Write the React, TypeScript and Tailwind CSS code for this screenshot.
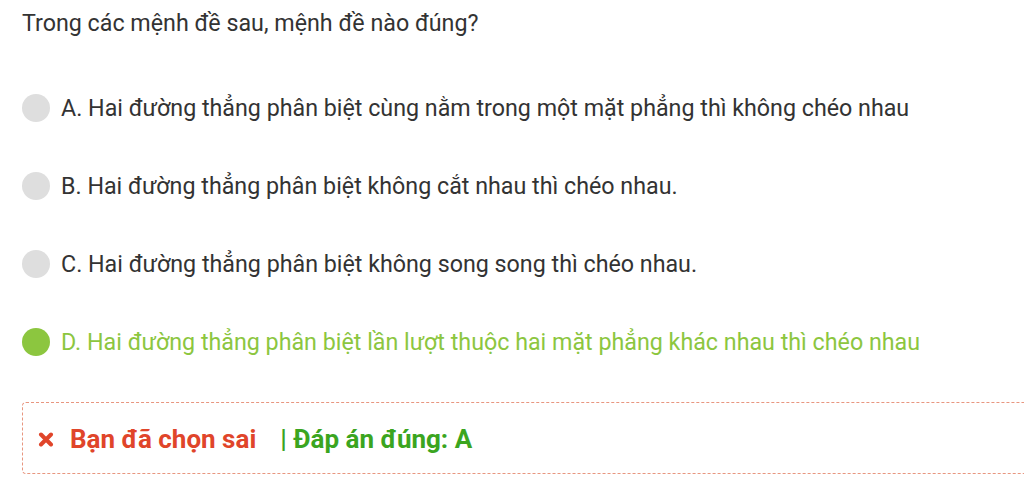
import React from "react";

const options = [
  { key: "A", text: "A. Hai đường thẳng phân biệt cùng nằm trong một mặt phẳng thì không chéo nhau", chosen: false },
  { key: "B", text: "B. Hai đường thẳng phân biệt không cắt nhau thì chéo nhau.", chosen: false },
  { key: "C", text: "C. Hai đường thẳng phân biệt không song song thì chéo nhau.", chosen: false },
  { key: "D", text: "D. Hai đường thẳng phân biệt lần lượt thuộc hai mặt phẳng khác nhau thì chéo nhau", chosen: true },
];

export default function App() {
  return (
    <div
      className="w-[1024px] h-[483px] overflow-hidden bg-white"
      style={{ fontFamily: "Roboto, 'Noto Sans', sans-serif" }}
    >
      <div className="pl-[22px] pt-[8px]">
        <div className="text-[23.25px] leading-[30px] text-[#333333]">
          Trong các mệnh đề sau, mệnh đề nào đúng?
        </div>
        <div className="mt-[56px] flex flex-col gap-[50px]">
          {options.map((o) => (
            <div key={o.key} className="flex items-center gap-[11px] h-[28px]">
              <span
                className={
                  o.chosen
                    ? "w-[28px] h-[28px] rounded-full bg-[#8cc63f] shrink-0"
                    : "w-[28px] h-[28px] rounded-full bg-[#dedede] shrink-0"
                }
              />
              <span
                className={
                  o.chosen
                    ? "text-[23.25px] leading-[28px] text-[#8cc63f] whitespace-nowrap"
                    : "text-[23.25px] leading-[28px] text-[#333333] whitespace-nowrap"
                }
              >
                {o.text}
              </span>
            </div>
          ))}
        </div>
        <div className="mt-[46px] w-[1040px] h-[72px] border border-dashed border-[#e8967f] rounded-[4px] flex items-center pl-[15px] pt-[2px]">
          <svg width="16" height="15" viewBox="0 0 16 15" className="mr-[16px]">
            <path d="M3 2.5 L13 12.5 M13 2.5 L3 12.5" stroke="#e0452a" strokeWidth="4" strokeLinecap="round" />
          </svg>
          <span className="text-[26px] font-bold text-[#e0452a]">Bạn đã chọn sai</span>
          <span className="ml-[24px] text-[26px] font-bold text-[#3ba51f]">| Đáp án đúng: A</span>
        </div>
      </div>
    </div>
  );
}
